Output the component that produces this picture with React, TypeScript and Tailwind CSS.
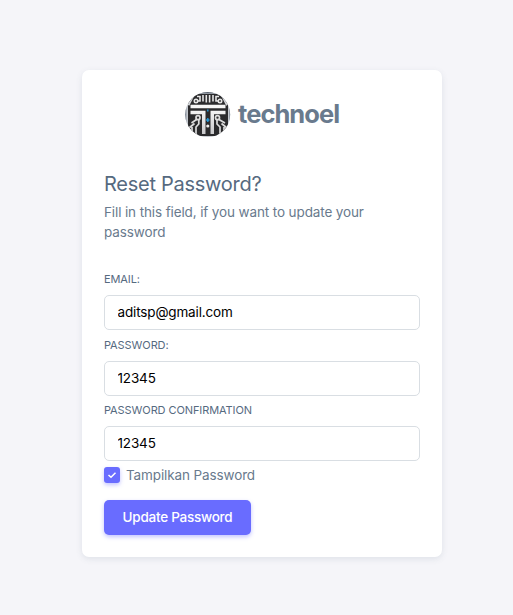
import React from "react";

function Logo() {
  return (
    <svg width="46" height="46" viewBox="0 0 46 46" aria-hidden="true">
      <defs>
        <clipPath id="disc">
          <circle cx="22.700" cy="22.600" r="22.500" />
        </clipPath>
        <linearGradient id="metal" x1="0" y1="0" x2="0" y2="1">
          <stop offset="0" stopColor="#f4f4f4" />
          <stop offset="1" stopColor="#c9c9cb" />
        </linearGradient>
      </defs>
      <g clipPath="url(#disc)">
        <rect width="46" height="46" fill="#c5c9cf" />
        <rect x="3" y="2" width="40" height="42" fill="#2b2b2d" />
        <path d="M0 0H46V1.500H0Z" fill="#5d6672" />
        <path d="M0.700 12V34M45 12V34" stroke="#717b88" strokeWidth="1.200" />
        <path d="M9 1L3 13M36.500 1L42.500 13" stroke="#d5d7da" strokeWidth="3" />
        <g fill="none" stroke="#e6e6e6" strokeWidth="1.600">
          <path d="M18 3V9.500M21.300 3V10.500M24.600 3V10.500M28 3V9.500" />
          <path d="M12 9H15V4.500H12M34 9H31V4.500H34" />
          <circle cx="11" cy="9" r="1.700" />
          <circle cx="35" cy="9" r="1.700" />
        </g>
        <path d="M5.500 12.800H40.500V16.300H5.500Z" fill="#f6f6f6" />
        <path d="M5.500 18.700H20.500V42H17V22.300H5.500Z" fill="url(#metal)" />
        <path d="M40.500 18.700H25.500V42H29V22.300H40.500Z" fill="url(#metal)" />
        <g fill="none" stroke="#dcdcdc" strokeWidth="1.700">
          <circle cx="13" cy="25.700" r="2" />
          <circle cx="32.500" cy="25.700" r="2" />
          <path d="M11.500 27.500L6.500 31M34 27.500L40 31" />
          <path d="M13.800 28V32L11 35V44M32 28V32L35 35V44" />
          <path d="M4 36L9.500 31.500M42 36L36.500 31.500M7 35V44M39 35V44" />
        </g>
        <path d="M22.800 17.500V19.500M22.800 26V30M21.100 28H24.500" stroke="#269bdb" strokeWidth="1.400" />
        <circle cx="22.800" cy="34" r="1.600" fill="#eeeeee" />
      </g>
    </svg>
  );
}

function Field({ label, value, className }: { label: string; value: string; className: string }) {
  return (
    <div className={className}>
      <label className="block h-4 whitespace-nowrap text-[11px] leading-4 font-normal tracking-[-0.09px] text-[#566a7f]">{label}</label>
      <input
        type="text"
        defaultValue={value}
        className="mt-2 block h-[35px] w-full rounded-[5px] border border-[#d9dee3] bg-white px-[12.5px] pb-[2px] text-[13.5px] tracking-[-0.15px] text-black outline-none"
      />
    </div>
  );
}

export default function App() {
  return (
    <main className="min-h-[615px] bg-[#f5f5f9] pt-[70px] pl-[82px] font-['Inter','Liberation_Sans',sans-serif]">
      <section className="h-[487px] w-[360px] rounded-[7px] bg-white px-[22px] pt-[22px] shadow-[0_2px_6px_rgba(67,89,113,0.12)]">
        <div className="flex h-[46px] items-center pl-[81px]">
          <Logo />
          <span className="ml-[7px] pb-[2px] text-[25.5px] leading-[30px] font-bold tracking-[-0.95px] text-[#697a8d]">technoel</span>
        </div>
        <h4 className="mt-[33px] h-[26px] whitespace-nowrap text-[20px] leading-[26px] tracking-[-0.27px] text-[#566a7f]">Reset Password?</h4>
        <p className="mt-[5px] text-[13.5px] leading-5 tracking-[-0.12px] whitespace-nowrap text-[#697a8d]">
          Fill in this field, if you want to update your<br />password
        </p>
        <form className="mt-[29px]" onSubmit={(e) => e.preventDefault()}>
          <Field label="EMAIL:" value="aditsp@gmail.com" className="h-[66px]" />
          <Field label="PASSWORD:" value="12345" className="h-[65px]" />
          <Field label="PASSWORD CONFIRMATION" value="12345" className="h-[59px]" />
          <label className="mt-[4px] flex h-5 items-center gap-[6px] text-[13.5px] tracking-[-0.12px] text-[#697a8d]">
            <span className="flex size-4 items-center justify-center rounded-[3px] bg-[#696cff] shadow-[0_2px_4px_rgba(105,108,255,0.4)]">
              <svg width="10" height="10" viewBox="0 0 10 10" fill="none" stroke="white" strokeWidth="1.500">
                <path d="M1.500 5L4 7.300L8.500 2.800" />
              </svg>
            </span>
            <span className="whitespace-nowrap">Tampilkan Password</span>
          </label>
          <button className="mt-[15px] block h-[35px] w-[147px] rounded-[5px] bg-[#696cff] text-center text-[13.5px] font-medium tracking-[-0.25px] whitespace-nowrap text-white shadow-[0_2px_4px_rgba(105,108,255,0.4)]">Update Password</button>
        </form>
      </section>
    </main>
  );
}
